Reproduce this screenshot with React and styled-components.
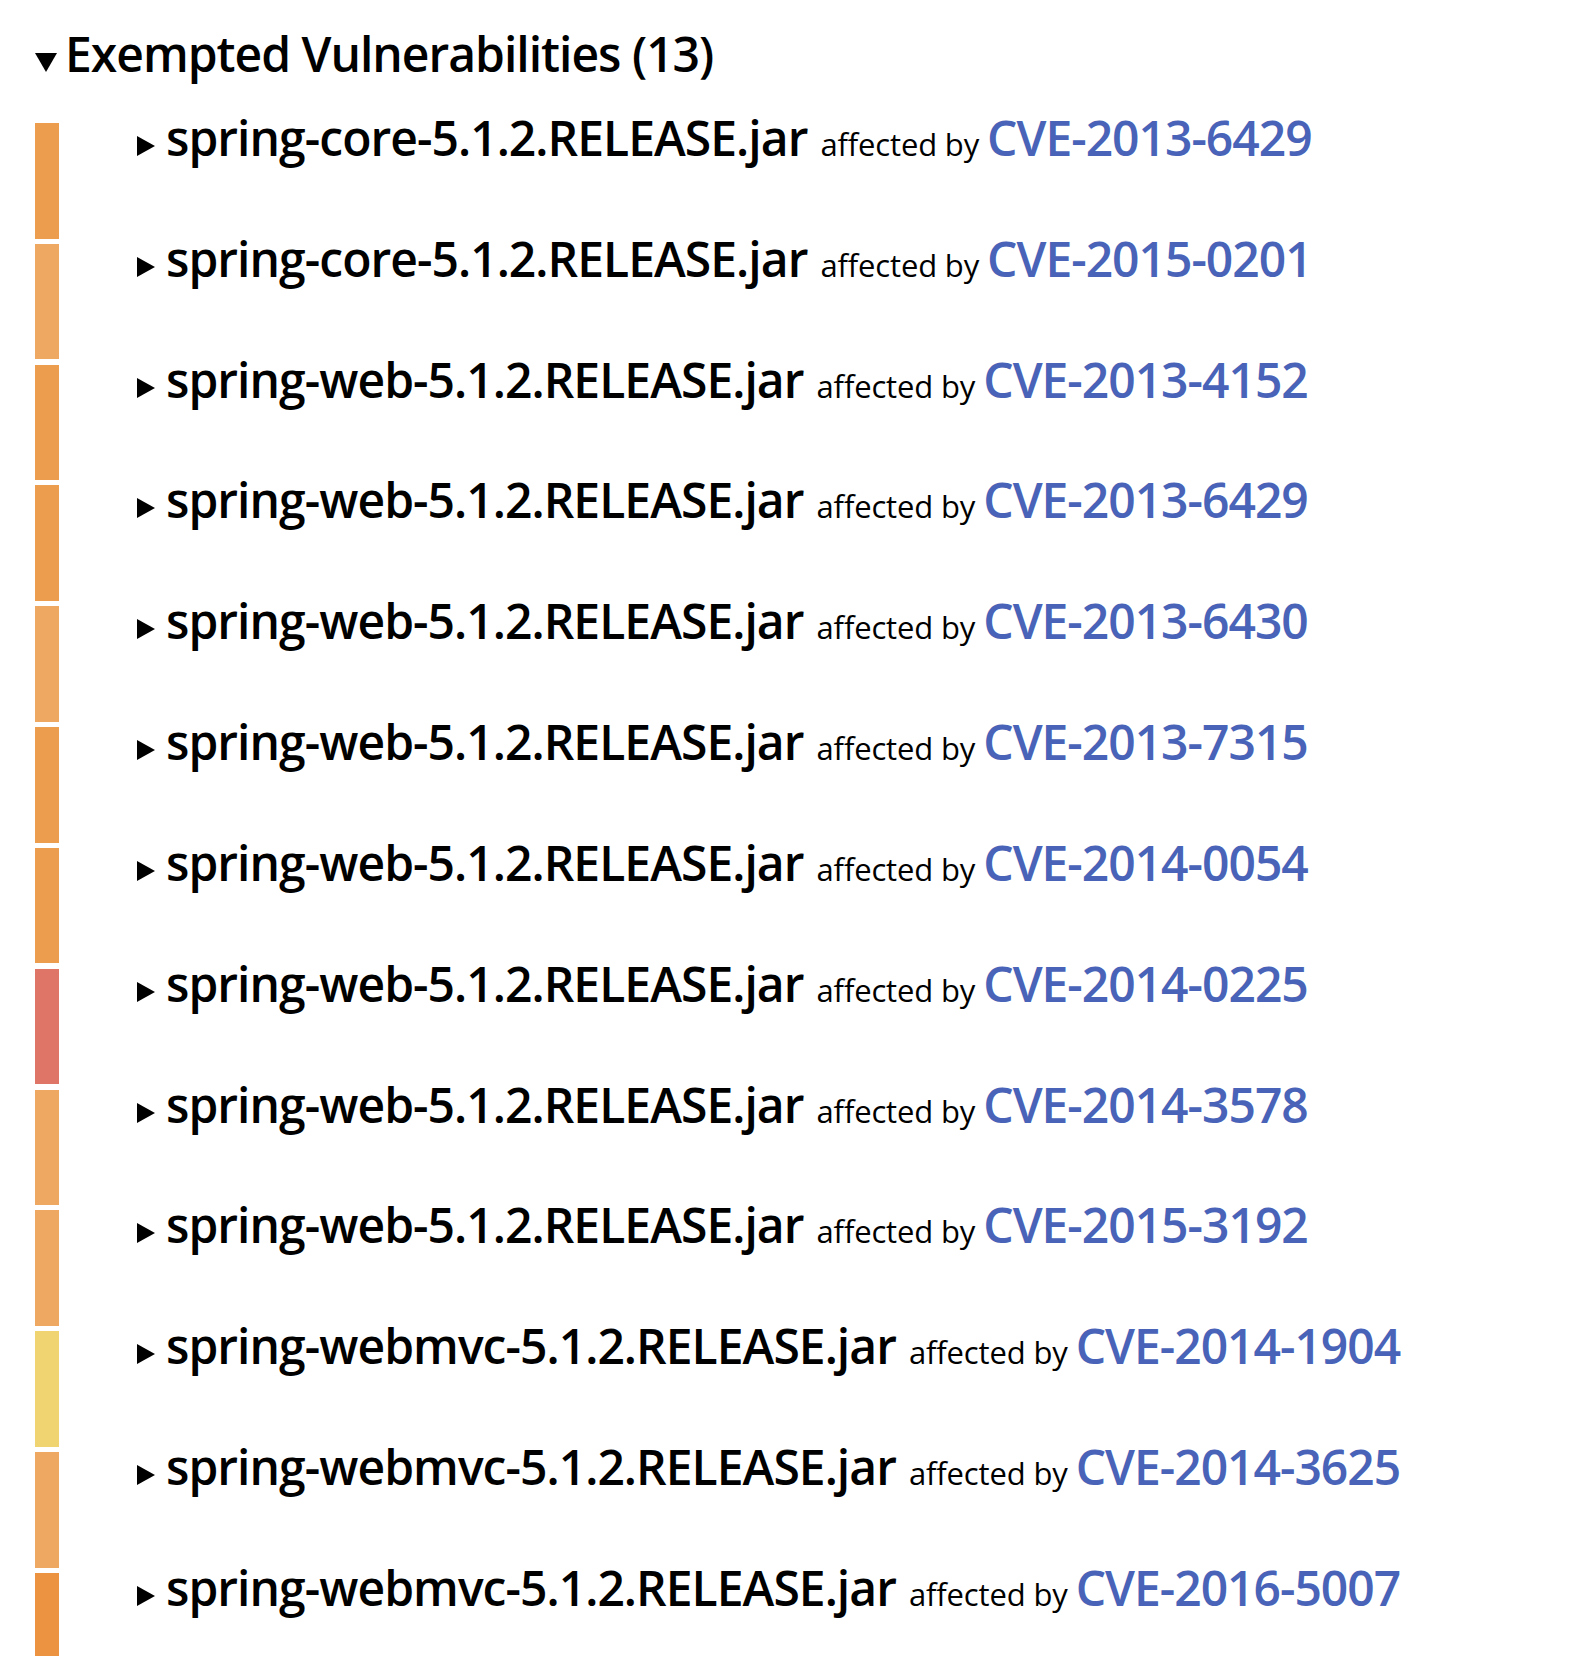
import React from 'react';
import styled, { createGlobalStyle } from 'styled-components';

// Severity colours used for the left marker bars
const severity = {
  high: '#ED9D4E',
  medium: '#EEA862',
  critical: '#DE7566',
  low: '#F0D472',
  elevated: '#EB9341',
};

const vulnerabilities = [
  { pkg: 'spring-core-5.1.2.RELEASE.jar', cve: 'CVE-2013-6429', level: 'high' },
  { pkg: 'spring-core-5.1.2.RELEASE.jar', cve: 'CVE-2015-0201', level: 'medium' },
  { pkg: 'spring-web-5.1.2.RELEASE.jar', cve: 'CVE-2013-4152', level: 'high' },
  { pkg: 'spring-web-5.1.2.RELEASE.jar', cve: 'CVE-2013-6429', level: 'high' },
  { pkg: 'spring-web-5.1.2.RELEASE.jar', cve: 'CVE-2013-6430', level: 'medium' },
  { pkg: 'spring-web-5.1.2.RELEASE.jar', cve: 'CVE-2013-7315', level: 'high' },
  { pkg: 'spring-web-5.1.2.RELEASE.jar', cve: 'CVE-2014-0054', level: 'high' },
  { pkg: 'spring-web-5.1.2.RELEASE.jar', cve: 'CVE-2014-0225', level: 'critical' },
  { pkg: 'spring-web-5.1.2.RELEASE.jar', cve: 'CVE-2014-3578', level: 'medium' },
  { pkg: 'spring-web-5.1.2.RELEASE.jar', cve: 'CVE-2015-3192', level: 'medium' },
  { pkg: 'spring-webmvc-5.1.2.RELEASE.jar', cve: 'CVE-2014-1904', level: 'low' },
  { pkg: 'spring-webmvc-5.1.2.RELEASE.jar', cve: 'CVE-2014-3625', level: 'medium' },
  { pkg: 'spring-webmvc-5.1.2.RELEASE.jar', cve: 'CVE-2016-5007', level: 'elevated' },
];

const GlobalStyle = createGlobalStyle`
  html, body {
    margin: 0;
    padding: 0;
    background: #ffffff;
    color: #000000;
    font-family: "Open Sans", "Noto Sans", sans-serif;
  }
`;

const Page = styled.div`
  padding: 21px 0 0 35px;
  height: 1635px;
  overflow: hidden;
`;

const Summary = styled.div`
  display: flex;
  align-items: baseline;
  gap: 8px;
  font-size: 48px;
  font-weight: 600;
  line-height: 65px;
  letter-spacing: -1px;
`;

const List = styled.ul`
  list-style: none;
  margin: 37px 0 0;
  padding: 0;
`;

const Row = styled.li`
  display: flex;
  align-items: flex-start;
  height: 115.5px;
  margin-bottom: 5.33px;
`;

const Bar = styled.div`
  flex: 0 0 24px;
  height: 100%;
  background: ${(p) => p.color};
`;

const Line = styled.div`
  display: flex;
  align-items: baseline;
  margin-left: 78px;
  line-height: 30px;
  white-space: nowrap;
`;

const Package = styled.span`
  margin-left: 11px;
  font-size: 48px;
  font-weight: 600;
  letter-spacing: -0.95px;
`;

const Affected = styled.span`
  margin: 0 8px 0 13px;
  font-size: 31px;
  font-weight: 400;
  letter-spacing: -0.15px;
`;

const CveLink = styled.a`
  font-size: 48px;
  font-weight: 600;
  letter-spacing: -1px;
  color: #4863B7;
  text-decoration: none;
`;

function Caret({ open, size }) {
  if (open) {
    return (
      <svg width={size} height={size - 3} viewBox="0 0 22 19">
        <polygon points="0,0 22,0 11,19" fill="#000" />
      </svg>
    );
  }
  return (
    <svg width={size - 2} height={size} viewBox="0 0 18 20">
      <polygon points="0,0 18,10 0,20" fill="#000" />
    </svg>
  );
}

export default function App() {
  return (
    <>
      <GlobalStyle />
      <Page>
        <Summary>
          <Caret open size={22} />
          <span>Exempted Vulnerabilities ({vulnerabilities.length})</span>
        </Summary>
        <List>
          {vulnerabilities.map((v, i) => (
            <Row key={i}>
              <Bar color={severity[v.level]} />
              <Line>
                <Caret size={20} />
                <Package>{v.pkg}</Package>
                <Affected>affected by</Affected>
                <CveLink href="#">{v.cve}</CveLink>
              </Line>
            </Row>
          ))}
        </List>
      </Page>
    </>
  );
}
